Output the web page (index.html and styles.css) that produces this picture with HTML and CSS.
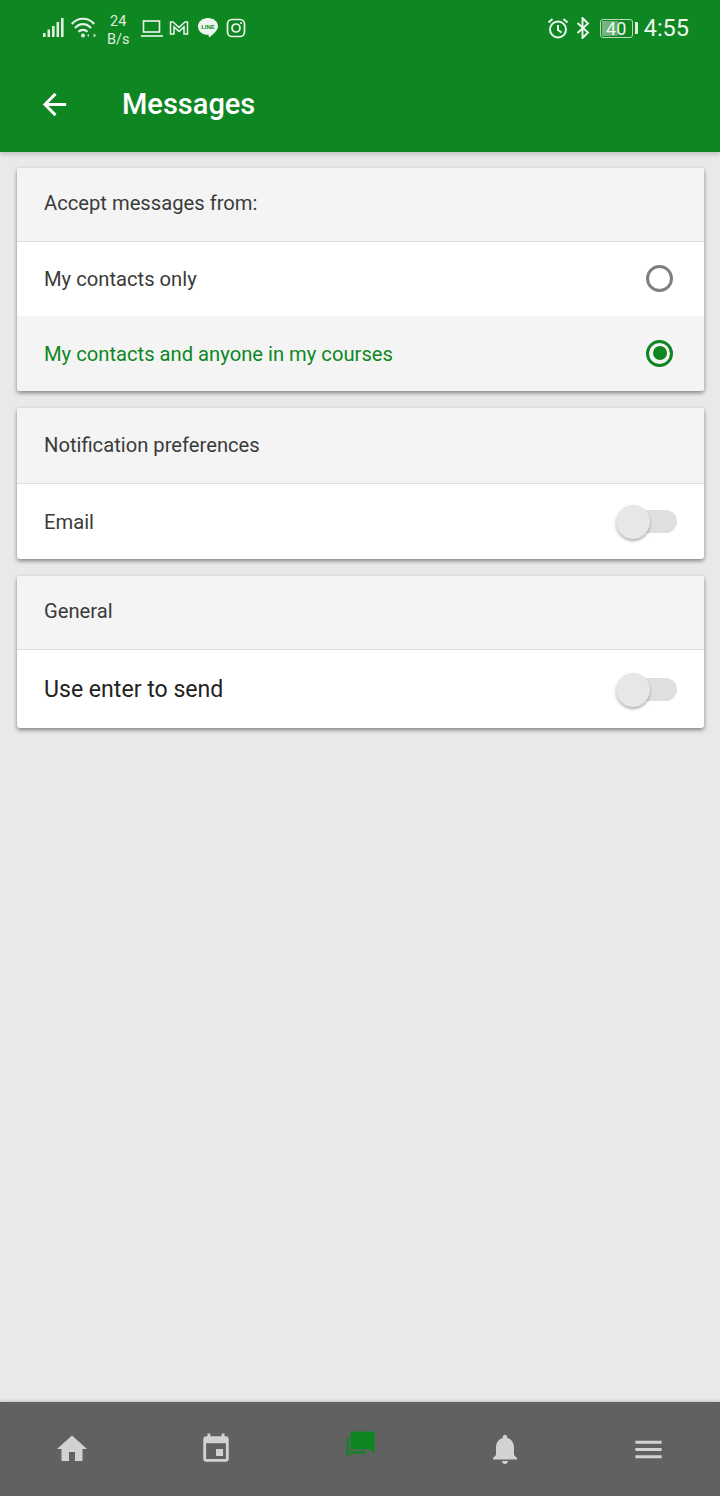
FILE: index.html
```html
<!DOCTYPE html>
<html lang="en">
<head>
    <meta charset="UTF-8">
    <meta name="viewport" content="width=device-width, initial-scale=1.0">
    <title>Messages</title>
    <link rel="stylesheet" href="styles.css">
</head>
<body>
    <div class="app">
        <div class="top-bar">
            <!-- Phone status bar -->
            <div class="status-bar">
                <div class="status-left">
                    <svg class="ic-signal" width="22" height="22" viewBox="0 0 22 22" fill="#dfeedd">
                        <rect x="0" y="16" width="2.600" height="4"/>
                        <rect x="4.500" y="12.500" width="2.600" height="7.500"/>
                        <rect x="9" y="9" width="2.600" height="11"/>
                        <rect x="13.500" y="5" width="2.600" height="15"/>
                        <rect x="18" y="1" width="2.600" height="19"/>
                    </svg>
                    <svg class="ic-wifi" width="26" height="22" viewBox="0 0 26 22" fill="none" stroke="#e6f2e5" stroke-width="2.200">
                        <path d="M0.800 7 C6.500 0 17.500 0 23.200 7"/>
                        <path d="M4 11 C8.500 5.800 15.500 5.800 20 11"/>
                        <path d="M7.500 14.800 C10 12.300 14 12.300 16.500 14.800"/>
                        <circle cx="12" cy="18.500" r="2" fill="#e6f2e5" stroke="none"/>
                        <path d="M18 16.800 v3.500 l-2 -1.750z M22.500 16.500 v4 l3 -2z" fill="#b9d9bc" stroke="none"/>
                    </svg>
                    <div class="net-speed"><span>24</span><span>B/s</span></div>
                    <svg class="ic-laptop" width="24" height="20" viewBox="0 0 24 20" fill="none" stroke="#eef6ed" stroke-width="1.600">
                        <rect x="3.500" y="3" width="16" height="11"/>
                        <path d="M1 18 H23"/>
                    </svg>
                    <svg class="ic-gmail" width="20" height="16" viewBox="0 0 20 16" fill="none" stroke="#eef6ed" stroke-width="1.500">
                        <path d="M1.500 14 V2 H4 L10 7.500 L16 2 H18.500 V14 H15 V7 L10 11.500 L5 7 V14z"/>
                    </svg>
                    <svg class="ic-line" width="22" height="22" viewBox="0 0 22 22">
                        <path d="M11 1 C16.500 1 21 4.500 21 9.500 C21 13.500 15.500 18 12 20.500 L11.500 17.800 C5.500 18 1 14.500 1 9.500 C1 4.500 5.500 1 11 1z" fill="#eef6ed"/>
                        <text x="11" y="12" class="line-text">LINE</text>
                    </svg>
                    <svg class="ic-insta" width="20" height="20" viewBox="0 0 20 20" fill="none" stroke="#eef6ed" stroke-width="1.700">
                        <rect x="1.500" y="1.500" width="17" height="17" rx="4.500"/>
                        <circle cx="10" cy="10" r="4"/>
                        <circle cx="15" cy="5" r="1" fill="#eef6ed" stroke="none"/>
                    </svg>
                </div>
                <div class="status-right">
                    <svg class="ic-alarm" width="22" height="22" viewBox="0 0 22 22" fill="none" stroke="#eef6ed" stroke-width="2">
                        <circle cx="11" cy="12.500" r="8"/>
                        <path d="M11 8 V13 L14.500 15.500"/>
                        <path d="M1.500 5.500 L5.500 2"/>
                        <path d="M20.500 5.500 L16.500 2"/>
                    </svg>
                    <svg class="ic-bt" width="14" height="22" viewBox="0 0 14 22" fill="none" stroke="#eef6ed" stroke-width="1.900">
                        <path d="M1.500 6 L12 15.500 L6.500 21 V1 L12 6.500 L1.500 16"/>
                    </svg>
                    <div class="battery">
                        <div class="battery-body">
                            <div class="battery-fill"></div>
                            <span>40</span>
                        </div>
                        <div class="battery-tip"></div>
                    </div>
                    <div class="clock">4:55</div>
                </div>
            </div>
            <!-- Toolbar -->
            <div class="toolbar">
                <svg class="back-icon" width="35" height="35" viewBox="0 0 24 24" fill="#fff">
                    <path d="M20 11H7.830l5.590-5.590L12 4l-8 8 8 8 1.410-1.410L7.830 13H20v-2z"/>
                </svg>
                <div class="toolbar-title">Messages</div>
            </div>
        </div>

        <div class="content">
            <div class="card">
                <div class="card-header h-first">Accept messages from:</div>
                <div class="row row-first">
                    <span>My contacts only</span>
                    <div class="radio"></div>
                </div>
                <div class="row row-selected">
                    <span>My contacts and anyone in my courses</span>
                    <div class="radio radio-on"><div class="radio-dot"></div></div>
                </div>
            </div>

            <div class="card">
                <div class="card-header h-second">Notification preferences</div>
                <div class="row">
                    <span>Email</span>
                    <div class="toggle"><div class="toggle-knob"></div></div>
                </div>
            </div>

            <div class="card">
                <div class="card-header h-third">General</div>
                <div class="row row-big">
                    <span>Use enter to send</span>
                    <div class="toggle"><div class="toggle-knob"></div></div>
                </div>
            </div>
        </div>

        <div class="tab-bar">
            <div class="tab">
                <svg width="36" height="36" viewBox="0 0 24 24" fill="#d2d2d2"><path d="M10 20v-6h4v6h5v-8h3L12 3 2 12h3v8z"/></svg>
            </div>
            <div class="tab">
                <svg width="34" height="34" viewBox="0 0 24 24" fill="#d2d2d2"><path d="M17 12h-5v5h5v-5zM16 1v2H8V1H6v2H5c-1.110 0-1.990.9-1.990 2L3 19c0 1.100.89 2 2 2h14c1.100 0 2-.9 2-2V5c0-1.100-.9-2-2-2h-1V1h-2zm3 18H5V8h14v11z"/></svg>
            </div>
            <div class="tab tab-chat">
                <svg class="chat-icon" width="32" height="32" viewBox="0 0 32 32" fill="#0e8723">
                    <path d="M1 9.500 C1 8.500 1.500 8 2.500 8 H4 V21 H21 V24 H6 L1 28z" opacity="0.75"/>
                    <path d="M7 1.500 C6 1.500 5.500 2 5.500 3 V19.500 H25 L29.500 24 V3 C29.500 2 29 1.500 28 1.500z"/>
                </svg>
            </div>
            <div class="tab tab-bell">
                <svg width="36" height="36" viewBox="0 0 24 24" fill="#d2d2d2"><path d="M12 22c1.100 0 2-.9 2-2h-4c0 1.100.9 2 2 2zm6-6v-5c0-3.070-1.630-5.640-4.500-6.320V4c0-.83-.67-1.500-1.500-1.500s-1.500.67-1.500 1.500v.68C7.640 5.360 6 7.920 6 11v5l-2 2v1h16v-1l-2-2z"/></svg>
            </div>
            <div class="tab tab-menu">
                <svg width="35" height="35" viewBox="0 0 24 24" fill="#d2d2d2"><path d="M3 18h18v-2H3v2zm0-5h18v-2H3v2zm0-7v2h18V6H3z"/></svg>
            </div>
        </div>
    </div>
</body>
</html>
```

FILE: styles.css
```css
* {
    box-sizing: border-box;
}
html, body {
    margin: 0;
    padding: 0;
}
body {
    font-family: Roboto, "Liberation Sans", sans-serif;
    background-color: #e9e9e9;
    color: #3b3b3b;
}
.app {
    width: 720px;
    height: 1496px;
    display: flex;
    flex-direction: column;
    background-color: #e9e9e9;
}
.top-bar {
    height: 152px;
    background-color: #0e8723;
    color: #fff;
    box-shadow: 0 2px 5px rgba(0, 0, 0, 0.2);
    flex-shrink: 0;
}
.status-bar {
    height: 56px;
    display: flex;
    justify-content: space-between;
    padding: 0 31px 0 43px;
}
.status-left {
    display: flex;
    align-items: center;
}
.status-right {
    display: flex;
    align-items: center;
}
.ic-signal {
    margin-right: 6px;
}
.ic-wifi {
    margin-right: 10px;
}
.net-speed {
    display: flex;
    flex-direction: column;
    align-items: center;
    padding-top: 6px;
    font-size: 14.500px;
    line-height: 18px;
    color: #dfeedd;
    margin-right: 10px;
}
.ic-laptop {
    margin-right: 5px;
}
.ic-gmail {
    margin-right: 8px;
}
.ic-line {
    margin-right: 7px;
}
.line-text {
    font-family: "Liberation Sans", sans-serif;
    font-size: 6px;
    font-weight: bold;
    text-anchor: middle;
    fill: #0e8723;
}
.ic-alarm {
    margin-right: 7px;
}
.ic-bt {
    margin-right: 10px;
}
.battery {
    display: flex;
    align-items: center;
    margin-right: 6px;
}
.battery-body {
    position: relative;
    width: 33px;
    height: 19px;
    border: 1px solid #b9d9bc;
    border-radius: 3px;
    font-size: 18px;
    line-height: 17px;
    text-align: center;
    color: #eef6ed;
    overflow: hidden;
}
.battery-fill {
    position: absolute;
    left: 1px;
    top: 1px;
    bottom: 1px;
    width: 16px;
    background: linear-gradient(to right, #7ab884, #5fa96d);
}
.battery-body span {
    position: relative;
}
.battery-tip {
    width: 3px;
    height: 12px;
    margin-left: 2px;
    background-color: #dfeedd;
    border-radius: 0 1px 1px 0;
}
.clock {
    font-size: 23.500px;
    color: #eef6ed;
}
.toolbar {
    height: 96px;
    display: flex;
    align-items: center;
    padding-left: 37px;
}
.back-icon {
    margin-right: 50px;
}
.toolbar-title {
    font-size: 29px;
    font-weight: 500;
}
.content {
    flex: 1;
    padding: 16px 16px 0 17px;
    display: flex;
    flex-direction: column;
    gap: 17px;
}
.card {
    background-color: #fff;
    border-radius: 3px;
    box-shadow: 0 2px 4px rgba(0, 0, 0, 0.45);
    overflow: hidden;
}
.card-header {
    background-color: #f4f4f4;
    border-bottom: 1px solid #dedede;
    display: flex;
    align-items: center;
    padding: 0 0 3px 27px;
    font-size: 20.200px;
}
.h-first {
    height: 74px;
}
.h-second {
    height: 76px;
    padding-bottom: 1px;
}
.h-third {
    height: 74px;
}
.row {
    height: 75px;
    display: flex;
    align-items: center;
    justify-content: space-between;
    padding: 0 27px;
    font-size: 20.200px;
}
.row-first {
    height: 74px;
}
.row-selected {
    background-color: #f4f4f4;
    color: #0e8723;
}
.row-big {
    height: 78px;
    font-size: 23.100px;
    color: #222;
}
.radio {
    width: 27px;
    height: 27px;
    margin: 0 4px 1px 0;
    border: 3px solid #7f7f7f;
    border-radius: 50%;
    display: flex;
    align-items: center;
    justify-content: center;
}
.radio-on {
    border-color: #0e8723;
}
.radio-dot {
    width: 14px;
    height: 14px;
    background-color: #0e8723;
    border-radius: 50%;
}
.toggle {
    position: relative;
    width: 54px;
    height: 23px;
    background-color: #dfdfdf;
    border-radius: 12px;
}
.toggle-knob {
    position: absolute;
    left: -7px;
    top: -5px;
    width: 34px;
    height: 34px;
    background-color: #e7e7e7;
    border-radius: 50%;
    box-shadow: 0 2px 3px rgba(0, 0, 0, 0.3);
}
.tab-bar {
    height: 94px;
    flex-shrink: 0;
    background-color: #616161;
    box-shadow: 0 -1px 3px rgba(0, 0, 0, 0.18);
    display: flex;
}
.tab {
    flex: 1;
    display: flex;
    align-items: center;
    justify-content: center;
}
.tab-chat svg {
    margin-left: 2px;
}
.tab-bell svg {
    margin-left: 1px;
}
.tab-menu svg {
    margin-left: 1px;
}
.chat-icon {
    margin-bottom: 7px;
}
```
